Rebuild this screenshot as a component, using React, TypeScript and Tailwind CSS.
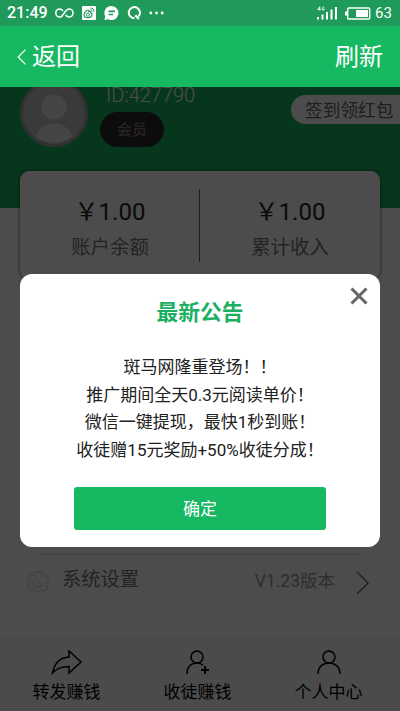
import type { ReactNode } from "react";

const NOTICE_LINES = [
  "斑马网隆重登场！！",
  "推广期间全天0.3元阅读单价！",
  "微信一键提现，最快1秒到账！",
  "收徒赠15元奖励+50%收徒分成！",
];

function StatusBar() {
  return (
    <div className="h-[26px] bg-[#209a5a] flex items-center pl-[7px] pr-[8px] text-white">
      <span className="w-[40px] text-[16px] leading-none font-medium whitespace-nowrap">21:49</span>
      <svg className="ml-[8px]" width="19" height="12" viewBox="0 0 19 12" fill="none" stroke="currentColor" strokeWidth="1.6">
        <path d="M8 4C6.900 2.600 6 2 4.800 2A4 4 0 0 0 4.800 10C8.500 10 9.800 2 14 2A4 4 0 0 1 14 10C12.600 10 11.500 9.200 10.600 8" />
      </svg>
      <svg className="ml-[8px]" width="14" height="14" viewBox="0 0 14 14" fill="none">
        <rect width="14" height="14" rx="1" fill="currentColor" />
        <path d="M10 8.300c0 2-1.900 3.300-4.100 3.300S2 10.500 2 8.700C2 6.900 4.700 4 6.200 4c.9 0 .9.9.6 1.700 1.400-.5 2.300-.1 2 1.100.8.2 1.200.8 1.200 1.500z" stroke="#209a5a" strokeWidth="1.200" />
        <circle cx="5.800" cy="8.700" r="1.500" stroke="#209a5a" />
        <path d="M8.200 2.200c2.300-.5 4.100 1.300 3.600 3.500M8.500 4c1-.2 1.700.5 1.500 1.400" stroke="#209a5a" />
      </svg>
      <svg className="ml-[8px]" width="15" height="14" viewBox="0 0 15 14">
        <path d="M7.500 0a7 7 0 1 1-3.300 13.200L.5 14l.7-3.700A7 7 0 0 1 7.500 0z" fill="currentColor" />
        <path d="M4.500 5.300h6.500M4.500 8.500h4.500" stroke="#209a5a" strokeWidth="1.700" />
      </svg>
      <svg className="ml-[8px]" width="14" height="14" viewBox="0 0 14 14" fill="none" stroke="currentColor" strokeWidth="2">
        <path d="M7.500 12.300A5.600 5.600 0 1 1 11.400 10.600" />
        <path d="M8.300 9.300l3.500 3.700" />
      </svg>
      <svg className="ml-[8px]" width="15" height="4" viewBox="0 0 15 4" fill="currentColor">
        <circle cx="1.800" cy="2" r="1.400" />
        <circle cx="7.500" cy="2" r="1.400" />
        <circle cx="13.200" cy="2" r="1.400" />
      </svg>
      <svg className="ml-auto" width="21" height="14" viewBox="0 0 21 14" fill="currentColor">
        <rect x="0" y="11" width="2" height="2.500" />
        <rect x="4.500" y="8.500" width="2" height="5" />
        <rect x="9" y="6" width="2" height="7.500" />
        <rect x="13.500" y="3.500" width="2" height="10" />
        <rect x="18" y="1" width="2" height="12.500" />
        <path d="M2.800 4.500V.7L.8 3.500h2.800M7.300 1.300C5 .2 4.500 4.300 6.300 4.300c1 0 1-.6 1-1.300H6.200" fill="none" stroke="currentColor" strokeWidth=".9" />
      </svg>
      <svg className="ml-[7px]" width="26" height="13" viewBox="0 0 26 13">
        <rect x="2.700" y="1" width="22" height="11" rx="1" fill="none" stroke="currentColor" strokeWidth="1.400" />
        <rect x="0" y="4.500" width="2.500" height="4" fill="currentColor" />
        <rect x="11" y="3" width="12" height="7" fill="currentColor" />
      </svg>
      <span className="ml-[4px] w-[17px] text-[15px] leading-none">63</span>
    </div>
  );
}

function Header() {
  return (
    <header className="relative z-20 h-[87px]">
      <StatusBar />
      <div className="h-[61px] bg-[#16b862] flex items-center justify-between px-[17px] pt-px text-[24px] text-white">
        <button className="flex items-center gap-[5px]">
          <svg width="10" height="16" viewBox="0 0 10 16" fill="none" stroke="currentColor" strokeWidth="1.200">
            <path d="M8.500.7L1.200 8l7.300 7.300" />
          </svg>
          返回
        </button>
        <button>刷新</button>
      </div>
    </header>
  );
}

function Balance({ amount, label }: { amount: string; label: string }) {
  return (
    <div className="w-1/2 text-center">
      <div className="text-[24px] leading-[32px] text-[#222]">{amount}</div>
      <div className="mt-[6px] text-[19.400px] leading-[28px] text-[#777]">{label}</div>
    </div>
  );
}

function Tab({ icon, label }: { icon: ReactNode; label: string }) {
  return (
    <div className="w-[131px] flex flex-col items-center">
      {icon}
      <span className="mt-[5px] text-[17px] leading-[24px] text-black">{label}</span>
    </div>
  );
}

function NoticeDialog() {
  return (
    <div className="absolute left-[20px] top-[274px] z-30 w-[360px] h-[273px] rounded-[12px] bg-white flex flex-col items-center">
      <button className="absolute right-[12px] top-[13px] text-[#666]">
        <svg width="18" height="18" viewBox="0 0 18 18" stroke="currentColor" strokeWidth="3">
          <path d="M1.500 1.500l15 15M16.500 1.500l-15 15" />
        </svg>
      </button>
      <h2 className="mt-[23px] text-[21.700px] leading-[32px] font-bold text-[#1aaf62]">最新公告</h2>
      <div className="mt-[25px] text-center text-[17px] leading-[27.500px] text-[#222]">
        {NOTICE_LINES.map((line) => (
          <p key={line} className="whitespace-nowrap">{line}</p>
        ))}
      </div>
      <button className="mt-[23px] w-[252px] h-[43px] rounded-[3px] bg-[#16b862] pt-[2px] text-[17px] text-white">
        确定
      </button>
    </div>
  );
}

export default function App() {
  return (
    <div className="relative w-[400px] h-[711px] overflow-hidden bg-white font-['Roboto','Noto_Sans_CJK_SC',sans-serif]">
      <Header />

      <section className="h-[121px] bg-[#16b862]">
        <div className="flex items-start pl-[20px]">
          <svg className="-mt-[8px] shrink-0" width="68" height="68" viewBox="0 0 68 68">
            <circle cx="34" cy="34" r="34" fill="#a4a4a4" />
            <circle cx="34" cy="34" r="31" fill="#c2c2c2" />
            <circle cx="34" cy="28" r="12.500" fill="#e7e7e7" />
            <path d="M15.500 57C19 48.500 26 44.500 34 44.500S49 48.500 52.500 57C43 66 25 66 15.500 57z" fill="#e7e7e7" />
          </svg>
          <div className="ml-[12px]">
            <div className="ml-[6px] pt-px text-[20px] leading-[14px] font-light text-white">ID:427790</div>
            <div className="mt-[10px] w-[64px] h-[35px] rounded-full bg-[#2b2b2b] flex items-center justify-center pt-px text-[15px] font-medium text-[#8e7474]">
              会员
            </div>
          </div>
          <div className="ml-auto mt-[8px] w-[109px] h-[29px] rounded-l-full bg-white pt-[2px] pl-[14px] text-[17.700px] leading-[29px] text-[#666] whitespace-nowrap">
            签到领红包
          </div>
        </div>
      </section>

      <section className="relative -mt-[37px] mx-[20px] h-[108px] rounded-[9px] bg-white shadow-[0_0_4px_rgba(0,0,0,0.600)] flex pt-[25px]">
        <Balance amount="￥1.00" label="账户余额" />
        <div className="-mt-[7px] -ml-px w-px h-[73px] bg-[#666]" />
        <Balance amount="￥1.00" label="累计收入" />
      </section>

      <div className="mt-[274px] mx-[40px] h-[2px] bg-[#e3e3e3]" />
      <div className="h-[82px] flex items-start pl-[26px] pr-[30px] pt-[12px]">
        <svg className="mt-[3px]" width="24" height="24" viewBox="0 0 24 24" fill="none" stroke="#e2e2e2" strokeWidth="1.500">
          <path d="M9 4.500L8 2h8l-1 2.500 3 1.500 3-1 2 6-2.500 1.500L20 16l2 2-4 3-2.500-1.500L13 22h-3l-1.500-2.500L5 20.500 2 16l2-3-2.500-2L3.500 5 7 6z" />
          <path d="M12 8a4.500 4.500 0 1 0 4.500 4.500M12 10.500v2.500h2" />
        </svg>
        <span className="ml-[12px] text-[19.300px] leading-[26px] text-[#777]">系统设置</span>
        <span className="ml-auto mt-px text-[17.500px] leading-[26px] text-[#999]">V1.23版本</span>
        <svg className="ml-[20px] mt-[4px]" width="15" height="24" viewBox="0 0 15 24" fill="none" stroke="#777" strokeWidth="1.500">
          <path d="M2 1l11 11L2 23" />
        </svg>
      </div>

      <nav className="h-[74px] border-t border-[#eee] bg-[#fafafa] flex pl-px pt-[12px]">
        <Tab
          label="转发赚钱"
          icon={
            <svg width="32" height="25" viewBox="0 0 32 25" fill="none" stroke="#000" strokeWidth="1.500">
              <path d="M18 1l12 11-12 11v-6.500C10 16.500 5.500 18.500 1.500 23 3.500 13 9.500 7.500 18 7z" />
            </svg>
          }
        />
        <Tab
          label="收徒赚钱"
          icon={
            <svg width="24" height="25" viewBox="0 0 24 25" fill="none" stroke="#000" strokeWidth="1.500">
              <circle cx="11" cy="7" r="6" />
              <path d="M1 24c0-7 4-11 10-11 2.500 0 4.500.8 6 2.300" />
              <path d="M19 16v8M15 20h8" strokeWidth="1.900" />
            </svg>
          }
        />
        <Tab
          label="个人中心"
          icon={
            <svg width="24" height="25" viewBox="0 0 24 25" fill="none" stroke="#000" strokeWidth="1.500">
              <circle cx="12" cy="7" r="6" />
              <path d="M1 24c0-7 4.500-11 11-11s11 4 11 11" />
            </svg>
          }
        />
      </nav>

      <div className="absolute inset-0 z-10 bg-black/70" />
      <NoticeDialog />
    </div>
  );
}
